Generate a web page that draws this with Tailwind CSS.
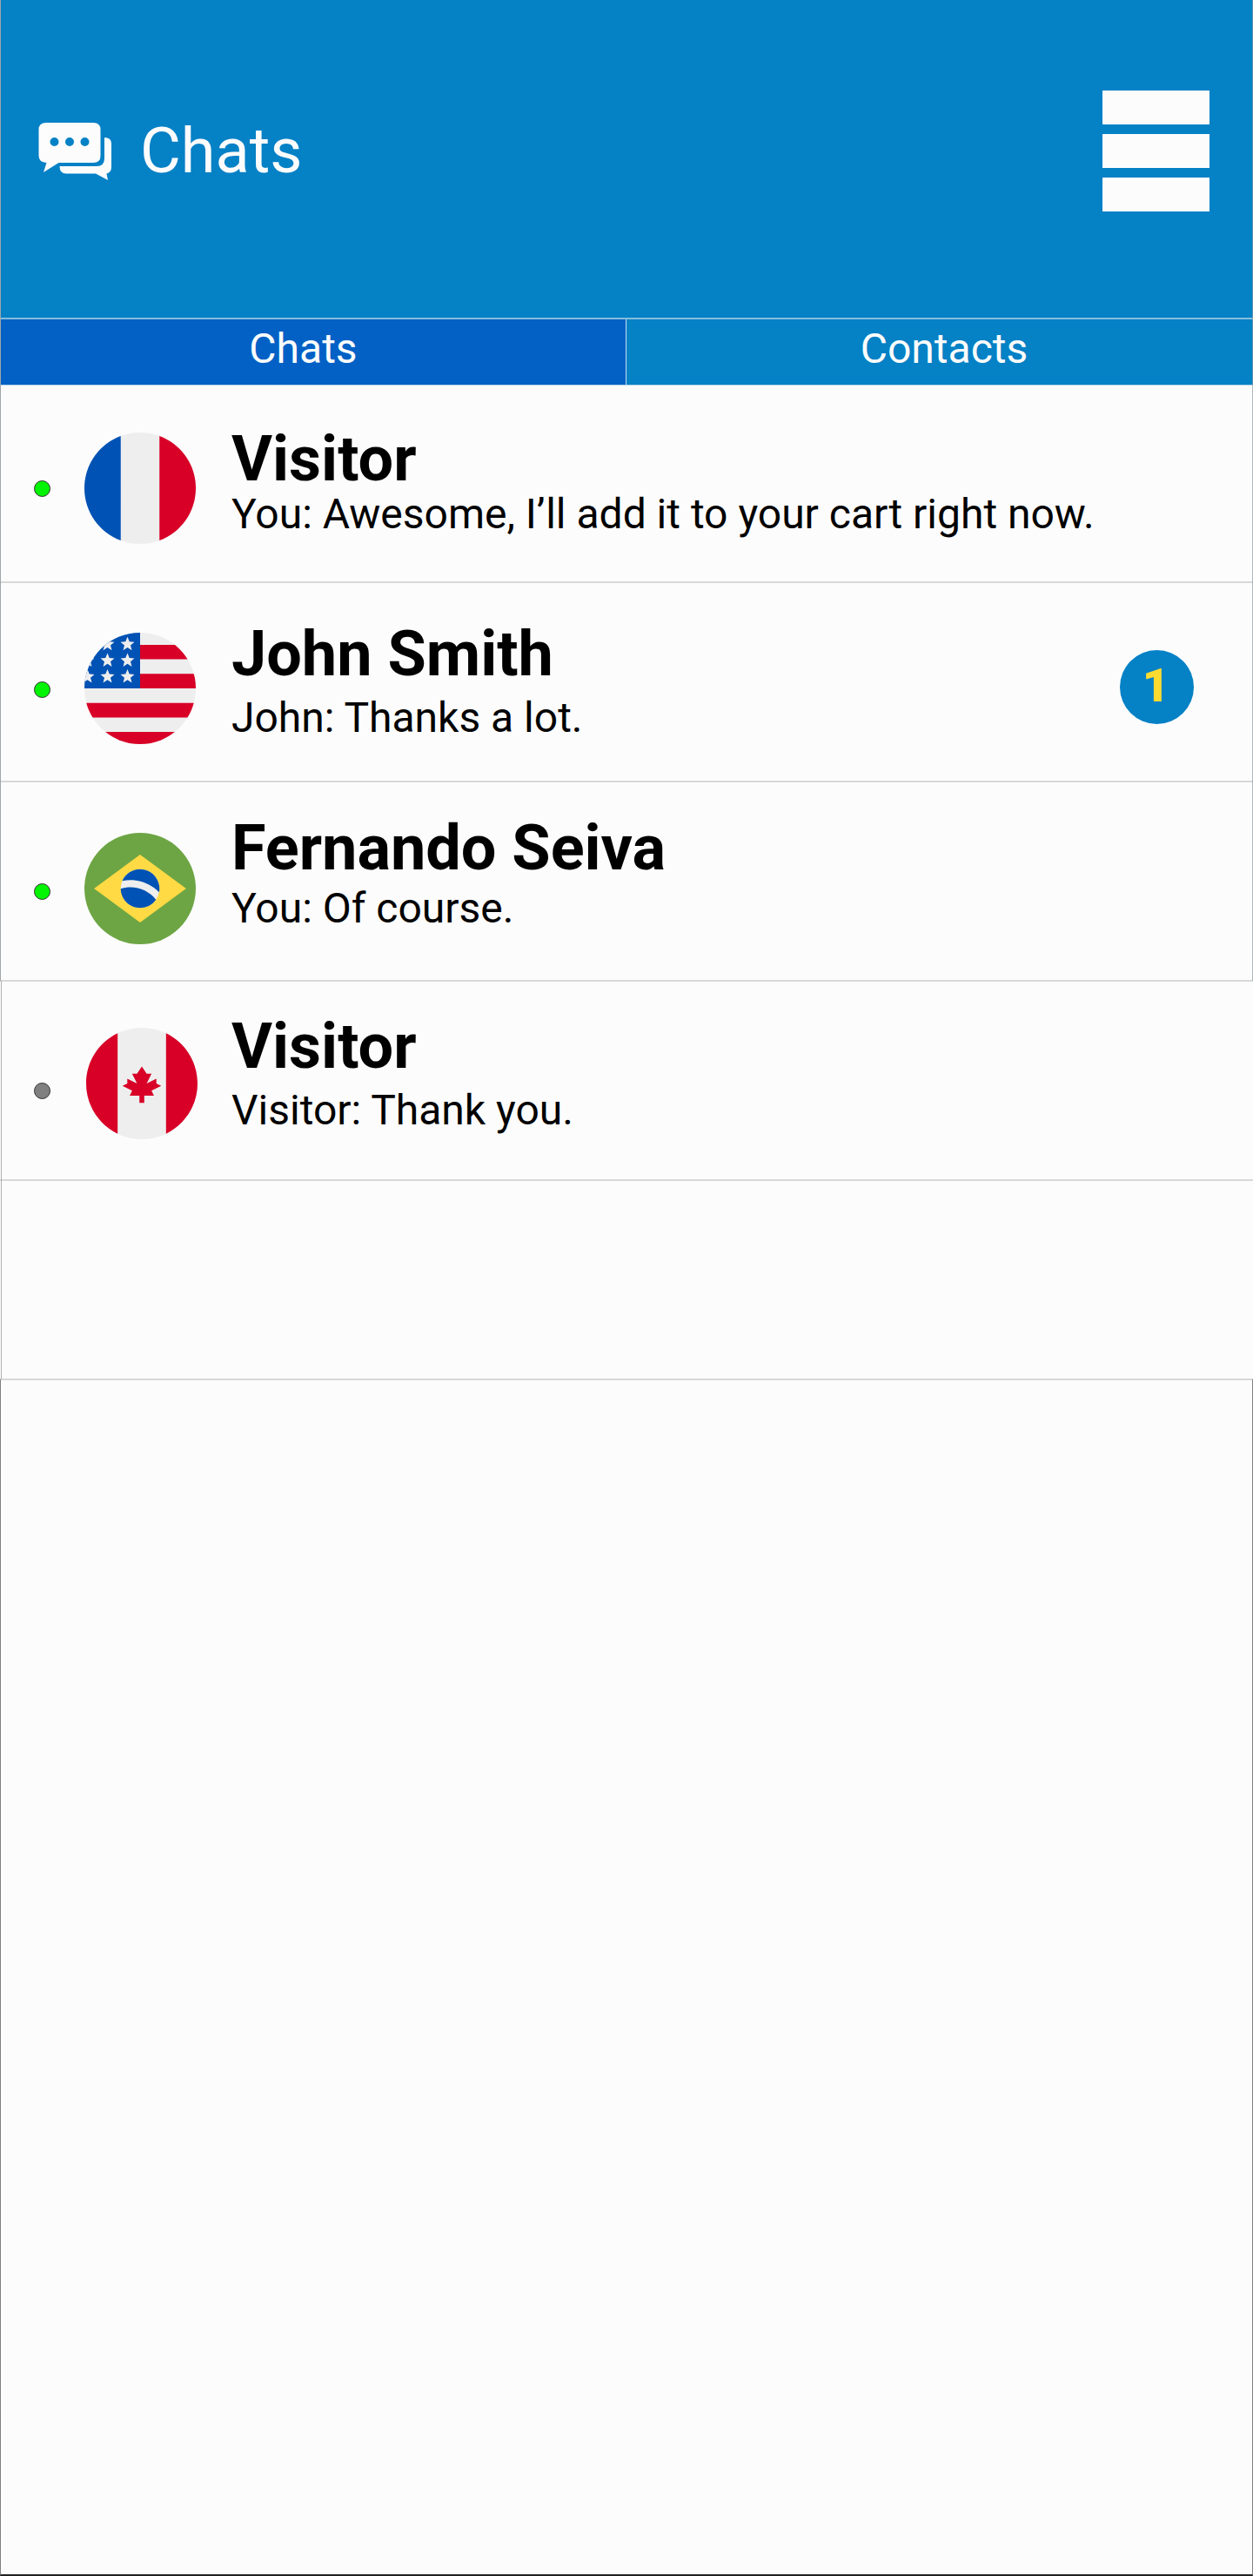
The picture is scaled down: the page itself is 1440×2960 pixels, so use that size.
<!DOCTYPE html>
<html lang="en">
<head>
<meta charset="utf-8">
<title>Chats</title>
<script src="https://cdn.jsdelivr.net/npm/@tailwindcss/browser@4"></script>
</head>
<body class="bg-[#fcfcfc] font-[Roboto,sans-serif] text-black">
<div class="relative flex h-[2960px] w-[1440px] flex-col overflow-hidden">
  <header class="flex h-[365px] shrink-0 items-start bg-[#0581c6] pl-[44px] pr-[50px] text-[#fcfcfc]">
    <svg class="mt-[140px] h-[68px] w-[85px] shrink-0" viewBox="0 0 85 68" fill="currentColor">
      <path fill-rule="evenodd" d="M9 1H63Q71.500 1 71.500 9V39Q71.500 47 63 47H23.500L6 58L9.500 47Q.5 46.500 .5 39V9Q.5 1 9 1ZM18.500 18a5 5 0 1 0 0 10a5 5 0 1 0 0-10ZM36 18a5 5 0 1 0 0 10a5 5 0 1 0 0-10ZM53.500 18a5 5 0 1 0 0 10a5 5 0 1 0 0-10Z"/>
      <path d="M76 18Q84 18 84 25V52Q84 58 78.500 59.500L80 67L66 59.500H32Q24.500 59.500 24.500 51H67Q76 51 76 42Z"/>
    </svg>
    <h1 class="ml-[32px] mt-[132px] text-[72px] leading-[84px]">Chats</h1>
    <div class="ml-auto mt-[104px] flex w-[123px] flex-col gap-[10.500px]">
      <div class="h-[39.300px] bg-[#fcfcfc]"></div>
      <div class="h-[39.300px] bg-[#fcfcfc]"></div>
      <div class="h-[39.300px] bg-[#fcfcfc]"></div>
    </div>
  </header>
  <nav class="flex h-[78px] shrink-0 border-b border-t-2 border-b-[#b4d4e6] border-t-[#85bddc] text-center text-[48px] leading-[56px] text-[#fcfcfc]">
    <div class="w-[719px] bg-[#0361c6] pt-[6px] pr-[22px]">Chats</div>
    <div class="flex-1 border-l border-[#c5e0ee] bg-[#0581c6] pt-[6px] pl-[10px]">Contacts</div>
  </nav>
  <main class="flex flex-col">
    <section class="flex h-[227px] items-start border-b-2 border-[#d8d8d8] pl-[39px]">
      <div class="mt-[109px] size-[19px] rounded-full border border-[#333] bg-[#02f402]"></div>
      <svg class="ml-[39px] mt-[54px] size-[128px]" viewBox="0 0 512 512">
        <circle cx="256" cy="256" r="256" fill="#eeeeee"/>
        <path fill="#d80027" d="M512 256c0-110.071-69.472-203.906-166.957-240.077v480.155C442.528 459.906 512 366.071 512 256z"/>
        <path fill="#0052b4" d="M0 256c0 110.071 69.473 203.906 166.957 240.077V15.923C69.473 52.094 0 145.929 0 256z"/>
      </svg>
      <div class="ml-[41px] mt-[53px]">
        <div class="text-[72px] font-bold leading-[64px]">Visitor</div>
        <div class="mt-[7px] text-[48px] leading-[48px]">You: Awesome, I’ll add it to your cart right now.</div>
      </div>
    </section>
    <section class="flex h-[229px] items-start border-b-2 border-[#d8d8d8] pl-[39px]">
      <div class="mt-[113px] size-[19px] rounded-full border border-[#333] bg-[#02f402]"></div>
      <svg class="ml-[39px] mt-[57px] size-[128px]" viewBox="0 0 512 512">
        <defs>
          <clipPath id="disc"><circle cx="256" cy="256" r="256"/></clipPath>
          <path id="star" d="M0-34L9-12L32-10.500L14 5L20 27.500L0 15L-20 27.500L-14 5L-32-10.500L-9-12Z"/>
        </defs>
        <g clip-path="url(#disc)">
          <rect width="512" height="512" fill="#eeeeee"/>
          <path fill="#d80027" d="M256 55.600H512V122.400H256ZM256 189.200H512V256H256ZM0 322.800H512V389.600H0ZM0 456.400H512V512H0Z"/>
          <rect width="256" height="256" fill="#0052b4"/>
          <g fill="#eeeeee">
            <use href="#star" x="106" y="53"/><use href="#star" x="198" y="53"/>
            <use href="#star" x="14" y="128"/><use href="#star" x="106" y="128"/><use href="#star" x="198" y="128"/>
            <use href="#star" x="14" y="202"/><use href="#star" x="106" y="202"/><use href="#star" x="198" y="202"/>
          </g>
        </g>
      </svg>
      <div class="ml-[41px] mt-[50px]">
        <div class="text-[72px] font-bold leading-[64px]">John Smith</div>
        <div class="mt-[17px] text-[48px] leading-[48px]">John: Thanks a lot.</div>
      </div>
      <div class="ml-auto mr-[68px] mt-[77px] flex size-[85px] items-center justify-center rounded-full bg-[#0581c6] pb-[4px] pr-[2px] text-[54px] font-black leading-none text-[#fbdb30]">1</div>
    </section>
    <section class="flex h-[229px] items-start border-b-2 border-[#d8d8d8] pl-[39px]">
      <div class="mt-[116px] size-[19px] rounded-full border border-[#333] bg-[#02f402]"></div>
      <svg class="ml-[39px] mt-[58px] size-[128px]" viewBox="0 0 512 512">
        <circle cx="256" cy="256" r="256" fill="#6da544"/>
        <path fill="#ffda44" d="M256 100.174L467.478 256L256 411.826L44.521 256Z"/>
        <circle cx="256" cy="256" r="89" fill="#eeeeee"/>
        <path fill="#0052b4" d="M211.478 250.435c-15.484 0-30.427 2.355-44.493 6.725.623 48.640 40.227 87.884 89.015 87.884 30.168 0 56.812-15.017 72.919-37.968-27.557-34.497-69.958-56.641-117.441-56.641zM343.393 273.060c1.072-5.524 1.651-11.223 1.651-17.060 0-49.178-39.866-89.043-89.043-89.043-36.694 0-68.194 22.201-81.826 53.899 12.050-2.497 24.526-3.812 37.305-3.812 51.717 0 98.503 21.498 131.913 56.016z"/>
      </svg>
      <div class="ml-[41px] mt-[44px]">
        <div class="text-[72px] font-bold leading-[64px]">Fernando Seiva</div>
        <div class="mt-[13px] text-[48px] leading-[48px]">You: Of course.</div>
      </div>
    </section>
    <section class="flex h-[229px] items-start border-b-2 border-[#d8d8d8] pl-[39px]">
      <div class="mt-[116px] size-[19px] rounded-full border border-[#333] bg-[#808080]"></div>
      <svg class="ml-[41px] mt-[53px] size-[128px]" viewBox="0 0 512 512">
        <circle cx="256" cy="256" r="256" fill="#eeeeee"/>
        <path fill="#d80027" d="M0 256c0 101.494 59.065 189.190 144.696 230.598V25.402C59.065 66.810 0 154.506 0 256zM512 256c0-101.494-59.065-189.190-144.696-230.598v461.195C452.935 445.190 512 357.494 512 256zM300.522 289.391L345.043 267.130L322.783 256V233.739L278.261 256L300.522 211.478H278.261L256 178.087L233.739 211.478H211.478L233.739 256L189.217 233.739V256L166.957 267.130L211.478 289.391L200.348 311.652H244.870V345.043H267.130V311.652H311.652Z"/>
      </svg>
      <div class="ml-[39px] mt-[43px]">
        <div class="text-[72px] font-bold leading-[64px]">Visitor</div>
        <div class="mt-[17px] text-[48px] leading-[48px]">Visitor: Thank you.</div>
      </div>
    </section>
    <section class="h-[229px] border-b-2 border-[#d8d8d8]"></section>
  </main>
  <div class="absolute left-0 top-0 h-[1127px] w-px bg-[#a0a6aa]"></div>
  <div class="absolute right-0 top-0 h-[1127px] w-px bg-[#8a9ba5]/70"></div>
  <div class="absolute left-px top-[1127px] h-[458px] w-px bg-[#b0b0b0]"></div>
  <div class="absolute inset-x-0 bottom-0 top-[1585px] border-x border-b-2 border-x-[#808080] border-b-[#222]"></div>
</div>
</body>
</html>
